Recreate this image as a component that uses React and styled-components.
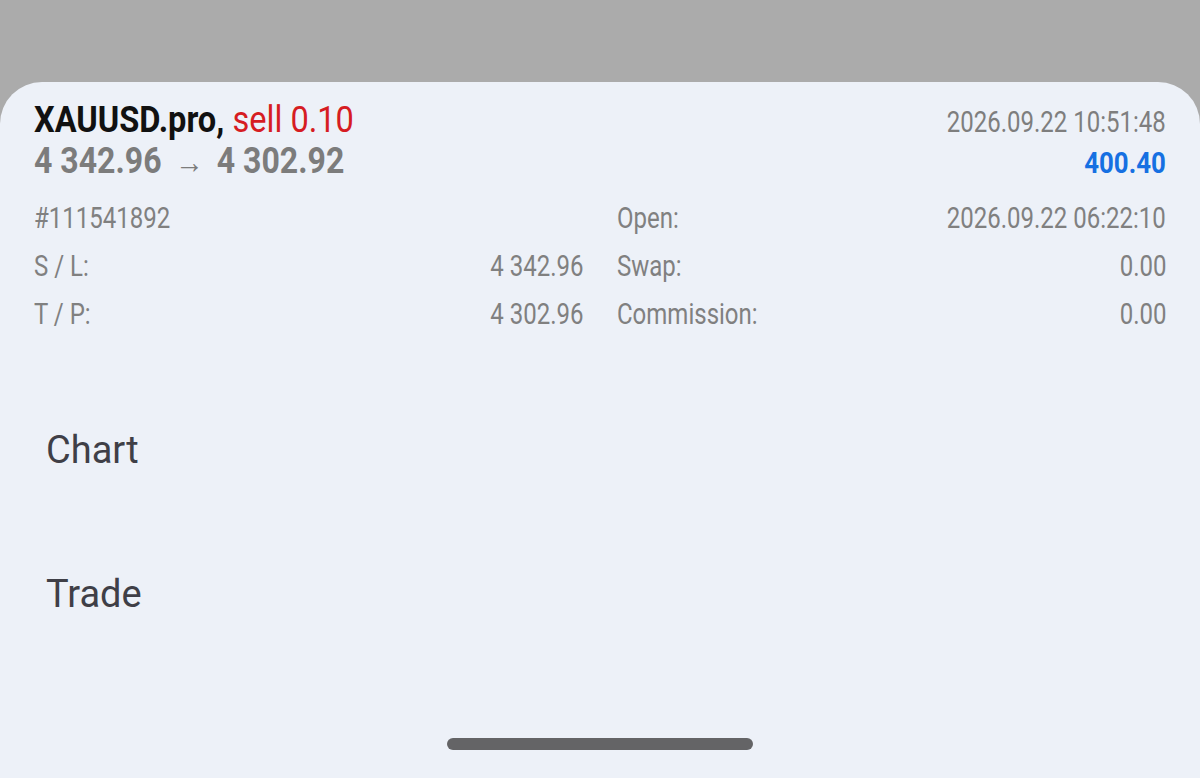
import React from "react";
import styled, { createGlobalStyle } from "styled-components";

const GlobalStyle = createGlobalStyle`
  html, body {
    margin: 0;
    padding: 0;
    background: #ababab;
    font-family: Roboto, "Noto Sans", sans-serif;
  }
  * {
    box-sizing: border-box;
  }
`;

const trade = {
  symbol: "XAUUSD.pro",
  side: "sell 0.10",
  priceOpen: "4 342.96",
  priceClose: "4 302.92",
  time: "2026.09.22 10:51:48",
  profit: "400.40",
  ticket: "#111541892",
  rows: [
    ["S / L:", "4 342.96", "Open:", "2026.09.22 06:22:10"],
    ["T / P:", "4 302.96", "Swap:", "0.00"],
  ],
  commission: "0.00",
};

const Screen = styled.div`
  height: 778px;
  padding-top: 82px;
  overflow: hidden;
`;

const Sheet = styled.div`
  height: 696px;
  background: #edf1f8;
  border-radius: 42px 42px 0 0;
  padding: 18px 34px 0 34px;
  display: flex;
  flex-direction: column;
`;

const HeadRow = styled.div`
  display: flex;
  justify-content: space-between;
  align-items: baseline;
  height: 41px;
  line-height: 41px;
`;

// condensed look: Roboto squeezed horizontally
const Cond = styled.span`
  display: inline-block;
  white-space: nowrap;
  transform: scaleX(${(p) => p.$sx || 0.8});
  transform-origin: ${(p) => (p.$right ? "right" : "left")} center;
`;

const Title = styled.div`
  font-size: 36px;
  font-weight: 700;
  color: #111111;
`;

const Side = styled.span`
  font-weight: 400;
  color: #d61c22;
`;

const Prices = styled.div`
  font-size: 36px;
  font-weight: 700;
  color: #7c7c7c;
`;

const Arrow = styled.span`
  font-weight: 400;
  font-size: 32px;
  margin: 0 15px;
`;

const Time = styled.div`
  font-size: 30px;
  color: #7e7e7e;
`;

const Profit = styled.div`
  font-size: 30px;
  font-weight: 700;
  color: #1670e2;
`;

const Details = styled.div`
  margin-top: 12px;
  display: grid;
  grid-template-columns: 1fr 1fr;
  column-gap: 33px;
`;

const Cell = styled.div`
  display: flex;
  justify-content: space-between;
  align-items: baseline;
  height: 48px;
  line-height: 48px;
  font-size: 30px;
  color: #808080;
`;

const Menu = styled.div`
  margin-top: 40px;
  display: flex;
  flex-direction: column;
`;

const MenuItem = styled.div`
  height: 144px;
  line-height: 144px;
  padding-left: 12px;
  font-size: 38px;
  font-weight: 400;
  color: #3f3f47;
`;

const HomeBar = styled.div`
  margin: auto auto 28px auto;
  width: 306px;
  height: 12px;
  border-radius: 6px;
  background: #646466;
`;

const Pair = ({ label, value }) => (
  <Cell>
    <Cond>{label}</Cond>
    <Cond $right>{value}</Cond>
  </Cell>
);

export default function App() {
  return (
    <Screen>
      <GlobalStyle />
      <Sheet>
        <HeadRow>
          <Title>
            <Cond $sx={0.905}>
              {trade.symbol}, <Side>{trade.side}</Side>
            </Cond>
          </Title>
          <Time>
            <Cond $right>{trade.time}</Cond>
          </Time>
        </HeadRow>
        <HeadRow>
          <Prices>
            <Cond $sx={0.89}>
              {trade.priceOpen}
              <Arrow>→</Arrow>
              {trade.priceClose}
            </Cond>
          </Prices>
          <Profit>
            <Cond $right $sx={0.86}>
              {trade.profit}
            </Cond>
          </Profit>
        </HeadRow>

        <Details>
          <Pair label={trade.ticket} value="" />
          <Pair label={trade.rows[0][2]} value={trade.rows[0][3]} />
          <Pair label={trade.rows[0][0]} value={trade.rows[0][1]} />
          <Pair label={trade.rows[1][2]} value={trade.rows[1][3]} />
          <Pair label={trade.rows[1][0]} value={trade.rows[1][1]} />
          <Pair label="Commission:" value={trade.commission} />
        </Details>

        <Menu>
          <MenuItem>Chart</MenuItem>
          <MenuItem>Trade</MenuItem>
        </Menu>

        <HomeBar />
      </Sheet>
    </Screen>
  );
}
